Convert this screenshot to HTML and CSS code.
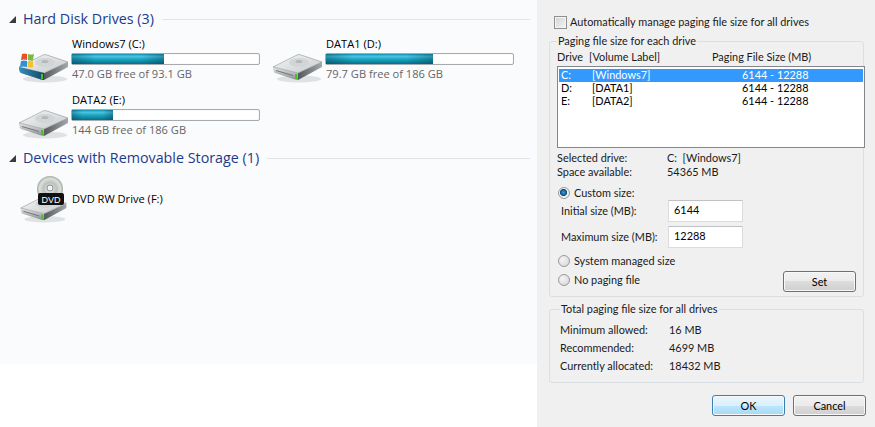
FILE: index.html
```html
<!DOCTYPE html>
<html lang="en">
<head>
    <meta charset="UTF-8">
    <title>Virtual Memory</title>
    <link rel="stylesheet" href="styles.css">
</head>
<body>
    <svg class="defs" width="0" height="0">
        <defs>
            <linearGradient id="topFace" x1="0" y1="0" x2="1" y2="1">
                <stop offset="0" stop-color="#f6f7f7"/>
                <stop offset="1" stop-color="#c6cacc"/>
            </linearGradient>
            <linearGradient id="frontFace" x1="0" y1="0" x2="0" y2="1">
                <stop offset="0" stop-color="#e4e6e6"/>
                <stop offset="1" stop-color="#8a8e91"/>
            </linearGradient>
            <linearGradient id="sideFace" x1="0" y1="0" x2="1" y2="0">
                <stop offset="0" stop-color="#55595c"/>
                <stop offset="1" stop-color="#a4a8aa"/>
            </linearGradient>
            <linearGradient id="blueFace" x1="0" y1="0" x2="1" y2="0">
                <stop offset="0" stop-color="#3a8db5"/>
                <stop offset="1" stop-color="#0f4a66"/>
            </linearGradient>
            <radialGradient id="discFace">
                <stop offset="0" stop-color="#f2f2f2"/>
                <stop offset="0.5" stop-color="#bcc0c0"/>
                <stop offset="0.8" stop-color="#dde1d6"/>
                <stop offset="1" stop-color="#a4a8a8"/>
            </radialGradient>
            <symbol id="disk" viewBox="0 0 52 30">
                <ellipse cx="27" cy="26" rx="22" ry="3.5" fill="#000" opacity="0.1"/>
                <path d="M1 14 L26 20 L26 27 L23 26.5 L3 20 Q1 19 1 14 Z" fill="url(#frontFace)"/>
                <path d="M26 20 L50 9 L50 14 L26 27 Z" fill="url(#sideFace)"/>
                <path d="M1 14 L25 2 Q27 1 29 2 L50 9 L26 20 Z" fill="url(#topFace)" stroke="#8f9396" stroke-width="0.6"/>
                <ellipse cx="27" cy="9.5" rx="10" ry="4.5" fill="#d2d5d6"/>
                <ellipse cx="27" cy="8.5" rx="3.5" ry="1.6" fill="#b4b8b9"/>
                <path d="M4 17 L21 22 L21 23 L4 18 Z" fill="#74787a"/>
                <rect x="23" y="21" width="2" height="5" fill="#46c02c"/>
            </symbol>
        </defs>
    </svg>

    <div class="page">
        <main class="explorer">
            <div class="group-head">
                <span class="arrow"></span>
                <h2>Hard Disk Drives (3)</h2>
                <span class="rule"></span>
            </div>
            <div class="drives">
                <div class="drive">
                    <svg class="drive-icon" viewBox="0 0 52 30">
                        <use href="#disk"/>
                        <path d="M1 14 L26 20 L26 27 L23 26.5 L3 20 Q1 19 1 14 Z" fill="url(#blueFace)"/>
                        <rect x="23" y="21" width="2" height="5" fill="#46c02c"/>
                        <path d="M4 1 Q6 0 9 1 L9 7 Q6 6 3 7 Z" fill="#e8502c"/>
                        <path d="M10 1 Q13 2 16 1 L15 7 Q13 8 10 7 Z" fill="#7db93a"/>
                        <path d="M3 8 Q6 7 9 8 L9 14 Q5 13 2 14 Z" fill="#2f8fd8"/>
                        <path d="M10 8 Q13 9 15 8 L15 14 Q13 15 10 14 Z" fill="#f5c02e"/>
                    </svg>
                    <div class="drive-info">
                        <div class="drive-name">Windows7 (C:)</div>
                        <div class="bar"><div class="fill" style="width: 49%"></div></div>
                        <div class="drive-free">47.0 GB free of 93.1 GB</div>
                    </div>
                </div>
                <div class="drive">
                    <svg class="drive-icon" viewBox="0 0 52 30"><use href="#disk"/></svg>
                    <div class="drive-info">
                        <div class="drive-name">DATA1 (D:)</div>
                        <div class="bar"><div class="fill" style="width: 57%"></div></div>
                        <div class="drive-free">79.7 GB free of 186 GB</div>
                    </div>
                </div>
                <div class="drive">
                    <svg class="drive-icon" viewBox="0 0 52 30"><use href="#disk"/></svg>
                    <div class="drive-info">
                        <div class="drive-name">DATA2 (E:)</div>
                        <div class="bar"><div class="fill" style="width: 22%"></div></div>
                        <div class="drive-free">144 GB free of 186 GB</div>
                    </div>
                </div>
            </div>
            <div class="group-head second">
                <span class="arrow"></span>
                <h2>Devices with Removable Storage (1)</h2>
                <span class="rule"></span>
            </div>
            <div class="dvd">
                <svg class="dvd-icon" viewBox="0 0 52 48">
                    <circle cx="32" cy="14" r="13" fill="url(#discFace)"/>
                    <circle cx="32" cy="13" r="3" fill="#f4f4f4" stroke="#8c9090"/>
                    <use href="#disk" x="0" y="20" width="52" height="28"/>
                    <rect x="20" y="18" width="26" height="12" rx="2" fill="#111"/>
                    <text x="33" y="27.5" class="dvd-text" text-anchor="middle">DVD</text>
                </svg>
                <div class="drive-name">DVD RW Drive (F:)</div>
            </div>
        </main>

        <aside class="dialog">
            <label class="auto-row"><span class="checkbox"></span>Automatically manage paging file size for all drives</label>

            <fieldset class="box each">
                <legend>Paging file size for each drive</legend>
                <div class="list-head">
                    <span class="col-drive">Drive</span>
                    <span class="col-label">[Volume Label]</span>
                    <span>Paging File Size (MB)</span>
                </div>
                <div class="list">
                    <div class="list-row selected"><span class="cell-drive">C:</span><span class="cell-label">[Windows7]</span><span>6144 - 12288</span></div>
                    <div class="list-row"><span class="cell-drive">D:</span><span class="cell-label">[DATA1]</span><span>6144 - 12288</span></div>
                    <div class="list-row"><span class="cell-drive">E:</span><span class="cell-label">[DATA2]</span><span>6144 - 12288</span></div>
                </div>
                <div class="info-row first"><span class="info-key">Selected drive:</span><span>C:&nbsp; [Windows7]</span></div>
                <div class="info-row"><span class="info-key">Space available:</span><span>54365 MB</span></div>
                <div class="radio-row custom"><span class="radio on"></span>Custom size:</div>
                <div class="size-row"><span class="size-key">Initial size (MB):</span><input class="size-input" type="text" value="6144"></div>
                <div class="size-row"><span class="size-key">Maximum size (MB):</span><input class="size-input" type="text" value="12288"></div>
                <div class="radio-row managed"><span class="radio"></span>System managed size</div>
                <div class="set-line">
                    <div class="radio-row"><span class="radio"></span>No paging file</div>
                    <button class="btn" type="button">Set</button>
                </div>
            </fieldset>

            <fieldset class="box total">
                <legend>Total paging file size for all drives</legend>
                <div class="total-row"><span class="total-key">Minimum allowed:</span><span>16 MB</span></div>
                <div class="total-row"><span class="total-key">Recommended:</span><span>4699 MB</span></div>
                <div class="total-row"><span class="total-key">Currently allocated:</span><span>18432 MB</span></div>
            </fieldset>

            <div class="actions">
                <button class="btn default" type="button">OK</button>
                <button class="btn" type="button">Cancel</button>
            </div>
        </aside>
    </div>
</body>
</html>
```

FILE: styles.css
```css
* {
    box-sizing: border-box;
}
html, body {
    margin: 0;
    padding: 0;
    background-color: white;
}
body {
    font-family: "Open Sans", "Noto Sans", sans-serif;
    font-size: 11.1px;
    line-height: 14px;
    color: #1a1a1a;
    overflow: hidden;
}
.defs {
    display: block;
    height: 0;
}
.page {
    display: flex;
    width: 875px;
    height: 427px;
}

/* explorer side */
.explorer {
    flex: none;
    width: 537px;
    height: 364px;
    padding: 9px 7px 0 9px;
    background-color: #fafbfd;
}
.group-head {
    display: flex;
    align-items: center;
    height: 20px;
}
.group-head.second {
    margin-top: 1px;
}
.arrow {
    width: 0;
    height: 0;
    margin-right: 7px;
    border-left: 7px solid transparent;
    border-bottom: 7px solid #3c3c3c;
}
.group-head h2 {
    margin: 0;
    font-size: 14.3px;
    font-weight: normal;
    color: #1e3a8a;
}
.rule {
    flex: 1;
    height: 1px;
    margin-left: 8px;
    background-color: #e0e3e8;
}
.drives {
    display: grid;
    grid-template-columns: 254px 254px;
    grid-template-rows: 56px 54px;
    margin-top: 8px;
}
.drive {
    display: flex;
}
.drive-icon {
    width: 52px;
    height: 30px;
    margin-top: 16px;
    margin-left: 9px;
}
.drive-info {
    width: 189px;
    margin-left: 1px;
}
.drive-name {
    color: #000;
    padding-left: 1px;
}
.bar {
    height: 12px;
    margin-top: 2px;
    border: 1px solid #a8abae;
    border-radius: 2px;
    background-color: white;
    box-shadow: inset 0 0 1px #ccc;
}
.fill {
    height: 100%;
    background: linear-gradient(to right, rgba(0, 50, 70, 0.35), rgba(0, 50, 70, 0) 25%, rgba(0, 50, 70, 0) 75%, rgba(0, 50, 70, 0.35)),
        linear-gradient(to bottom, #0b8fb0 0%, #4cc6e2 22%, #18a2c0 55%, #076e88 100%);
}
.drive-free {
    margin-top: 2px;
    padding-left: 1px;
    color: #666;
}
.dvd {
    display: flex;
    align-items: center;
    margin-top: 7px;
    margin-left: 9px;
}
.dvd-icon {
    width: 52px;
    height: 48px;
    margin-right: 1px;
}
.dvd-text {
    font-family: "Liberation Sans", sans-serif;
    font-size: 9px;
    fill: white;
}

/* dialog side */
.dialog {
    flex: none;
    width: 338px;
    padding: 15px 9px 0 12px;
    font-family: Lato, "Open Sans", sans-serif;
    font-size: 10.9px;
    background-color: #f0f0f0;
}
.auto-row {
    display: flex;
    align-items: center;
    height: 14px;
    padding-left: 5px;
}
.checkbox {
    width: 13px;
    height: 13px;
    margin-right: 3px;
    border: 1px solid #8e8f8f;
    background: linear-gradient(135deg, #d0d2d4, #f4f5f6);
    box-shadow: inset 0 0 0 1px #f4f4f4;
}
.box {
    margin: 0;
    padding: 0 0 0 7px;
    border: 1px solid #d9dfe3;
    border-radius: 3px;
    min-width: 0;
}
.box legend {
    padding: 0 1px;
    margin-left: 0;
}
.each {
    height: 263px;
    margin-top: 5px;
    margin-right: 2px;
}
.list-head {
    display: flex;
    height: 14px;
    margin-top: 2px;
}
.col-drive {
    width: 32px;
}
.col-label {
    width: 123px;
}
.list {
    width: 308px;
    height: 82px;
    margin-top: 2px;
    padding: 2px 1px;
    border: 1px solid #82878c;
    background-color: white;
    color: #000;
}
.list-row {
    display: flex;
    height: 13px;
    line-height: 12px;
    padding-left: 2px;
}
.list-row.selected {
    background-color: #3399ff;
    color: white;
}
.cell-drive {
    width: 31px;
}
.cell-label {
    width: 150px;
}
.info-row {
    display: flex;
}
.info-row.first {
    margin-top: 3px;
}
.info-key {
    width: 110px;
}
.radio-row {
    display: flex;
    align-items: center;
    height: 14px;
}
.radio-row.custom {
    margin-top: 7px;
}
.radio-row.managed {
    margin-top: 6px;
}
.radio {
    width: 12px;
    height: 12px;
    margin-left: 1px;
    margin-right: 4px;
    border: 1px solid #9a9a9a;
    border-radius: 50%;
    background: radial-gradient(circle at 35% 35%, #f4f4f4, #d4d4d4);
}
.radio.on {
    background: radial-gradient(circle at 45% 45%, #3aa0d8 0, #0a4f80 42%, #f0f0f0 50%);
}
.size-row {
    display: flex;
    align-items: center;
    height: 22px;
    margin-top: 4px;
    padding-left: 4px;
}
.custom + .size-row {
    margin-top: 0;
}
.size-key {
    width: 107px;
}
.size-input {
    width: 75px;
    height: 22px;
    padding: 0 5px 4px;
    border: 1px solid #dcdcdc;
    border-top-color: #bfc2c4;
    font: inherit;
    color: #000;
    background-color: white;
}
.set-line {
    display: flex;
    align-items: flex-start;
    justify-content: space-between;
    margin-top: 5px;
    padding-right: 7px;
}
.btn {
    width: 73px;
    height: 21px;
    padding: 0;
    border: 1px solid #707070;
    border-radius: 3px;
    font: inherit;
    color: #000;
    background: linear-gradient(to bottom, #f2f2f2 0%, #ebebeb 50%, #dddddd 50%, #cfcfcf 100%);
    box-shadow: inset 0 0 0 1px #f8f8f8;
}
.set-line .btn {
    margin-top: -2px;
}
.btn.default {
    border-color: #3c7fb1;
    background: linear-gradient(to bottom, #eaf6fd 0%, #d9f0fc 50%, #bee6fd 50%, #a7d9f5 100%);
}
.total {
    height: 81px;
    margin-top: 5px;
    padding-left: 10px;
    margin-right: 2px;
}
.total-row {
    display: flex;
    height: 18px;
    line-height: 18px;
}
.total-row:first-of-type {
    margin-top: 5px;
}
.total-key {
    width: 109px;
}
.actions {
    display: flex;
    justify-content: flex-end;
    gap: 8px;
    margin-top: 12px;
}
```
